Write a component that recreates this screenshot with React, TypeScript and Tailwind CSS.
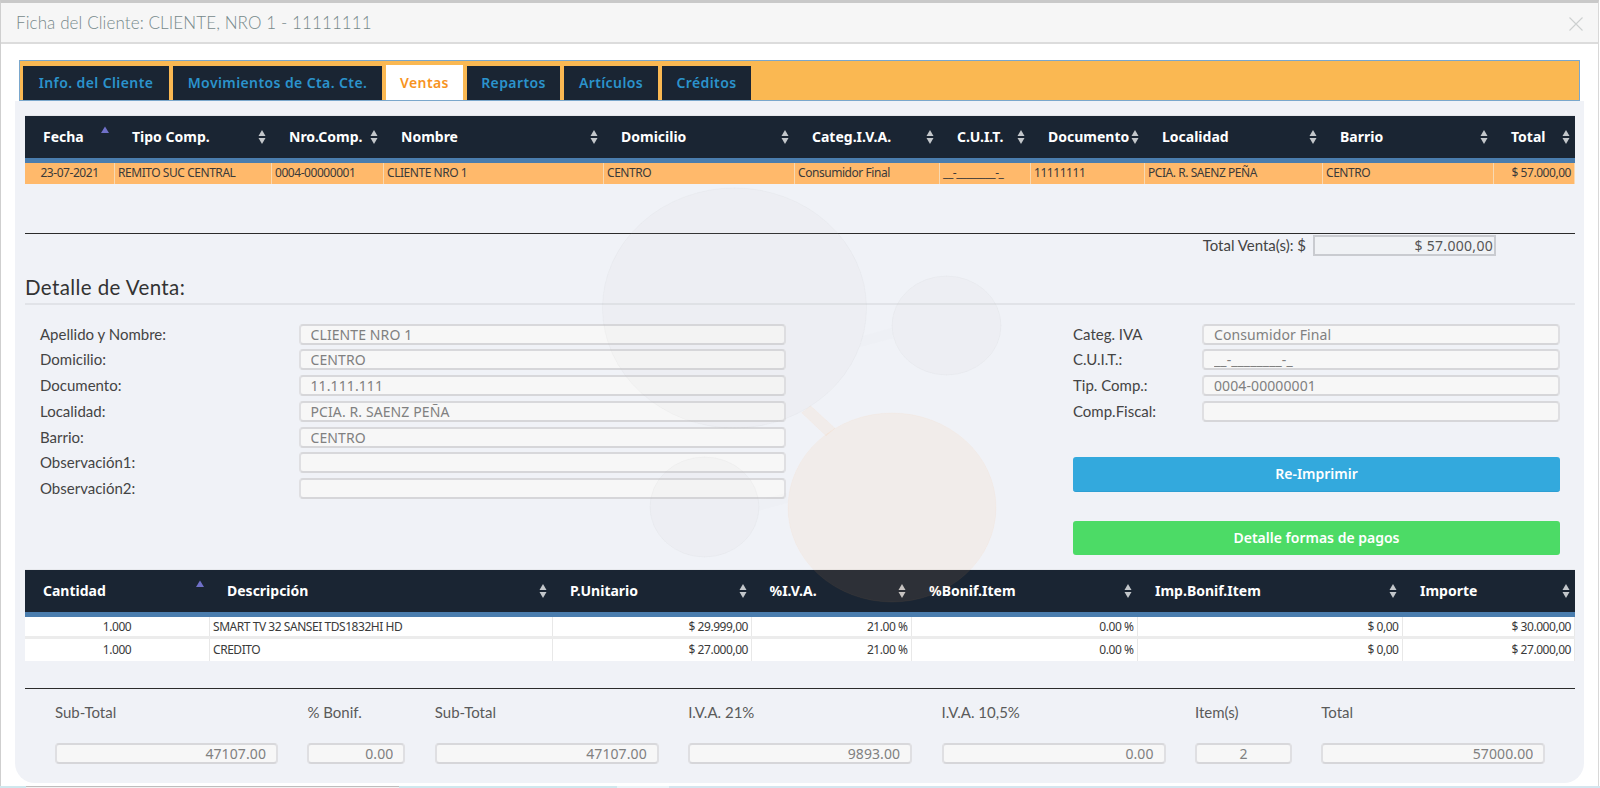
import React from "react";

const UI = "font-['Noto_Sans',sans-serif]";

function Sort({ asc }: { asc?: boolean }) {
  if (asc)
    return (
      <svg width="8" height="14" viewBox="0 0 8 14" className="shrink-0 -translate-y-[4px]">
        <path d="M4 0.5 L8 7 L0 7 Z" fill="#6f70c8" />
      </svg>
    );
  return (
    <svg width="8" height="14" viewBox="0 0 8 14" className="shrink-0">
      <path d="M4 0 L7.5 6 L0.5 6 Z" fill="#c3c7cb" />
      <path d="M4 14 L7.5 8 L0.5 8 Z" fill="#c3c7cb" />
    </svg>
  );
}

type Col = { t: string; w: number; asc?: boolean };

function Head({ cols }: { cols: Col[] }) {
  return (
    <thead>
      <tr className="border-t border-t-[#e6e8ec]">
        {cols.map((c) => (
          <th key={c.t} className="h-[45px] p-0 bg-[#1a2533] border-b-[5px] border-b-[#4a7dae] font-normal">
            <div className={`flex h-full items-center justify-between pl-[18px] pr-[5px] text-[14px] leading-none font-bold text-white ${UI}`}>
              <span className="whitespace-nowrap">{c.t}</span>
              <Sort asc={c.asc} />
            </div>
          </th>
        ))}
      </tr>
    </thead>
  );
}

const cols1: Col[] = [
  { t: "Fecha", w: 89, asc: true },
  { t: "Tipo Comp.", w: 157 },
  { t: "Nro.Comp.", w: 112 },
  { t: "Nombre", w: 220 },
  { t: "Domicilio", w: 191 },
  { t: "Categ.I.V.A.", w: 145 },
  { t: "C.U.I.T.", w: 91 },
  { t: "Documento", w: 114 },
  { t: "Localidad", w: 178 },
  { t: "Barrio", w: 171 },
  { t: "Total", w: 81.5 },
];
const cols2: Col[] = [
  { t: "Cantidad", w: 184, asc: true },
  { t: "Descripción", w: 343 },
  { t: "P.Unitario", w: 199.5 },
  { t: "%I.V.A.", w: 159.5 },
  { t: "%Bonif.Item", w: 226 },
  { t: "Imp.Bonif.Item", w: 265 },
  { t: "Importe", w: 172.5 },
];

function Cell({ children, align = "left", tone = "orange" }: { children: React.ReactNode; align?: "left" | "right" | "center"; tone?: "orange" | "white" }) {
  const a = align === "right" ? "text-right" : align === "center" ? "text-center" : "text-left";
  const b = tone === "orange" ? "border-r border-r-[#f7d9b3] bg-[#ffb96b]" : "border-r border-r-[#e8e8e8] bg-white";
  return (
    <td className={`h-[23px] overflow-hidden whitespace-nowrap pl-[3.5px] pr-[3px] py-0 text-[12px] leading-none text-[#3a3a3a] tracking-[-0.45px] ${UI} ${a} ${b}`}>
      {children}
    </td>
  );
}

function Table({ cols, children }: { cols: Col[]; children: React.ReactNode }) {
  return (
    <table className="w-[1549.5px] table-fixed border-collapse">
      <colgroup>
        {cols.map((c) => (
          <col key={c.t} style={{ width: c.w }} />
        ))}
      </colgroup>
      <Head cols={cols} />
      <tbody>{children}</tbody>
    </table>
  );
}

function Field({ value = "", className = "" }: { value?: string; className?: string }) {
  return (
    <input
      readOnly
      value={value}
      className={`h-[21px] min-w-0 rounded-[4px] border-2 border-[#dfdfe2] border-t-[#d8d8db] border-b-[#d6d6d9] bg-[#f7f7f7] px-[10px] text-[14px] leading-none tracking-[0.1px] text-[#808080] outline-none ${UI} ${className}`}
    />
  );
}

function Row({ label, value, lw, iw }: { label: string; value?: string; lw: string; iw: string }) {
  return (
    <div className="flex h-[21px] items-center">
      <span className={`${lw} shrink-0 text-[15px] leading-none text-[#444]`}>{label}</span>
      <Field value={value} className={iw} />
    </div>
  );
}

function Bottom({ label, value, w, center }: { label: string; value: string; w: string; center?: boolean }) {
  return (
    <div className={`flex flex-col ${w}`}>
      <span className="flex h-[24px] items-center text-[15px] leading-none text-[#5a5a5a]">{label}</span>
      <Field value={value} className={`mt-[18px] w-full ${center ? "text-center" : "text-right"}`} />
    </div>
  );
}

function Tab({ label, w, active }: { label: string; w: string; active?: boolean }) {
  return (
    <div
      className={`flex items-center justify-center text-[14px] font-semibold leading-none tracking-[0.4px] ${UI} ${w} ${
        active ? "h-[35px] bg-white text-[#f7931e]" : "h-[34px] bg-[#1a2533] text-[#2b93cc]"
      }`}
    >
      {label}
    </div>
  );
}

export default function App() {
  const left: [string, string][] = [
    ["Apellido y Nombre:", "CLIENTE NRO 1"],
    ["Domicilio:", "CENTRO"],
    ["Documento:", "11.111.111"],
    ["Localidad:", "PCIA. R. SAENZ PEÑA"],
    ["Barrio:", "CENTRO"],
    ["Observación1:", ""],
    ["Observación2:", ""],
  ];
  const right: [string, string][] = [
    ["Categ. IVA", "Consumidor Final"],
    ["C.U.I.T.:", "__-________-_"],
    ["Tip. Comp.:", "0004-00000001"],
    ["Comp.Fiscal:", ""],
  ];
  return (
    <div className="relative h-[788px] w-[1600px] overflow-hidden bg-white font-['Lato',sans-serif]">
      <div className="h-[786px] w-[1599px] border-l border-r border-t-[3px] border-l-[#cfcfcf] border-r-[#d8d8d8] border-t-[#c9c9c9]">
        <header className="flex h-[41px] items-center justify-between border-b-2 border-b-[#dcdcdc] bg-[#f6f6f6] pl-[15px] pr-[15px]">
          <span className="text-[17px] font-light leading-none tracking-[0.1px] text-[#76898b]">Ficha del Cliente: CLIENTE, NRO 1 - 11111111</span>
          <svg width="14" height="14" viewBox="0 0 14 14" className="mt-[2px]">
            <path d="M0.5 0.5 L13.5 13.5 M13.5 0.5 L0.5 13.5" stroke="#cdd0d0" strokeWidth="1.1" fill="none" />
          </svg>
        </header>

        <div className="ml-[18px] mt-[16px] flex h-[41px] w-[1561px] items-end gap-[4px] border border-[#7aa7cc] bg-[#fab852] pl-[3px]">
          <Tab label="Info. del Cliente" w="w-[146px]" />
          <Tab label="Movimientos de Cta. Cte." w="w-[209px]" />
          <Tab label="Ventas" w="w-[77px]" active />
          <Tab label="Repartos" w="w-[93px]" />
          <Tab label="Artículos" w="w-[94px]" />
          <Tab label="Créditos" w="w-[89px]" />
        </div>

        <main className="ml-[14px] h-[682px] w-[1569px] rounded-b-[20px] bg-[#f0f2f7] pl-[10px] pt-[14px]">
          <Table cols={cols1}>
            <tr>
              <Cell align="center">23-07-2021</Cell>
              <Cell>REMITO SUC CENTRAL</Cell>
              <Cell>0004-00000001</Cell>
              <Cell>CLIENTE NRO 1</Cell>
              <Cell>CENTRO</Cell>
              <Cell>Consumidor Final</Cell>
              <Cell>__-________-_</Cell>
              <Cell>11111111</Cell>
              <Cell>PCIA. R. SAENZ PEÑA</Cell>
              <Cell>CENTRO</Cell>
              <Cell align="right">$ 57.000,00</Cell>
            </tr>
          </Table>

          <div className="mt-[49px] h-px w-[1549.5px] bg-[#2b2b2b]" />
          <div className="mt-[1px] flex h-[21px] w-[1471px] items-center justify-end gap-[7px]">
            <span className="text-[15px] leading-none text-[#444]">Total Venta(s): $</span>
            <input
              readOnly
              value="$ 57.000,00"
              className={`h-[21px] w-[183px] border-2 border-[#c9cbd0] bg-[#f0f2f5] pl-[2px] pr-[1px] text-right text-[14px] leading-none tracking-[0.3px] text-[#555] outline-none ${UI}`}
            />
          </div>

          <h2 className="mt-[15px] flex h-[34px] w-[1549.5px] items-center border-b-2 border-b-[#e1e3e8] pt-[2px] text-[20.5px] font-normal leading-none tracking-[0.4px] text-[#333]">
            Detalle de Venta:
          </h2>

          <div className="mt-[19px] flex w-[1549.5px] items-start">
            <div className="ml-[15px] flex w-[746px] flex-col gap-[4.8px]">
              {left.map(([l, v]) => (
                <Row key={l} label={l} value={v} lw="w-[258.5px]" iw="w-[487.5px]" />
              ))}
            </div>
            <div className="ml-[287px] flex w-[487px] flex-col gap-[4.8px]">
              {right.map(([l, v]) => (
                <Row key={l} label={l} value={v} lw="w-[129px]" iw="w-[358px]" />
              ))}
              <button className={`mt-[30.3px] h-[35px] rounded-[3px] border-b border-b-[#2d9fd3] bg-[#33a9dd] text-[14px] font-semibold leading-none text-white ${UI}`}>
                Re-Imprimir
              </button>
              <button className={`mt-[24.5px] h-[34px] rounded-[3px] bg-[#4cdb66] text-[14px] font-semibold leading-none text-white ${UI}`}>
                Detalle formas de pagos
              </button>
            </div>
          </div>

          <div className="mt-[14px]">
            <Table cols={cols2}>
              <tr className="border-b-[3px] border-b-[#ececec]">
                <Cell align="center" tone="white">1.000</Cell>
                <Cell tone="white">SMART TV 32 SANSEI TDS1832HI HD</Cell>
                <Cell align="right" tone="white">$ 29.999,00</Cell>
                <Cell align="right" tone="white">21.00 %</Cell>
                <Cell align="right" tone="white">0.00 %</Cell>
                <Cell align="right" tone="white">$ 0,00</Cell>
                <Cell align="right" tone="white">$ 30.000,00</Cell>
              </tr>
              <tr>
                <Cell align="center" tone="white">1.000</Cell>
                <Cell tone="white">CREDITO</Cell>
                <Cell align="right" tone="white">$ 27.000,00</Cell>
                <Cell align="right" tone="white">21.00 %</Cell>
                <Cell align="right" tone="white">0.00 %</Cell>
                <Cell align="right" tone="white">$ 0,00</Cell>
                <Cell align="right" tone="white">$ 27.000,00</Cell>
              </tr>
            </Table>
          </div>

          <div className="mt-[27px] h-px w-[1549.5px] bg-[#2b2b2b]" />

          <div className="ml-[30px] mt-[12px] flex gap-[29.4px]">
            <Bottom label="Sub-Total" value="47107.00" w="w-[223px]" />
            <Bottom label="% Bonif." value="0.00" w="w-[98px]" />
            <Bottom label="Sub-Total" value="47107.00" w="w-[224px]" />
            <Bottom label="I.V.A. 21%" value="9893.00" w="w-[224px]" />
            <Bottom label="I.V.A. 10,5%" value="0.00" w="w-[224px]" />
            <Bottom label="Item(s)" value="2" w="w-[97px]" center />
            <Bottom label="Total" value="57000.00" w="w-[224px]" />
          </div>
        </main>
      </div>

      <div className="flex h-[2px]">
        <div className="w-[26px] bg-[#cfe8ee]" />
        <div className="w-[373px] border-t border-t-[#bdbdbd] bg-[#f2f2f2]" />
        <div className="w-[218px] bg-[#cfe8ee]" />
        <div className="w-[52px] bg-[#eaf4f8]" />
        <div className="flex-1 bg-[#d4e6ef]" />
      </div>

      <svg className="pointer-events-none absolute left-0 top-0" width="1600" height="788" viewBox="0 0 1600 788">
        <g fill="#c4c4cc" fillOpacity="0.07" stroke="#b0b0b8" strokeOpacity="0.08">
          <ellipse cx="734.5" cy="308" rx="132" ry="120" />
          <ellipse cx="946.5" cy="325.5" rx="54.5" ry="49.5" />
          <ellipse cx="704.5" cy="507" rx="54.5" ry="50" />
        </g>
        <g fill="#c4c4cc" fillOpacity="0.04">
          <path d="M862.7 336 L891.7 327.7 L893.3 338.3 L859.3 347.3 Z" />
          <path d="M759.3 510.7 L788.3 502.7 L786.7 492.7 L758.3 500 Z" />
        </g>
        <g fill="#ffac64" fillOpacity="0.085" stroke="#ffac64" strokeOpacity="0.05">
          <ellipse cx="892" cy="507.5" rx="104" ry="94.5" />
          <path d="M801.7 412.7 L810.7 406 L835 428.3 L826 435.7 Z" />
        </g>
      </svg>
    </div>
  );
}
